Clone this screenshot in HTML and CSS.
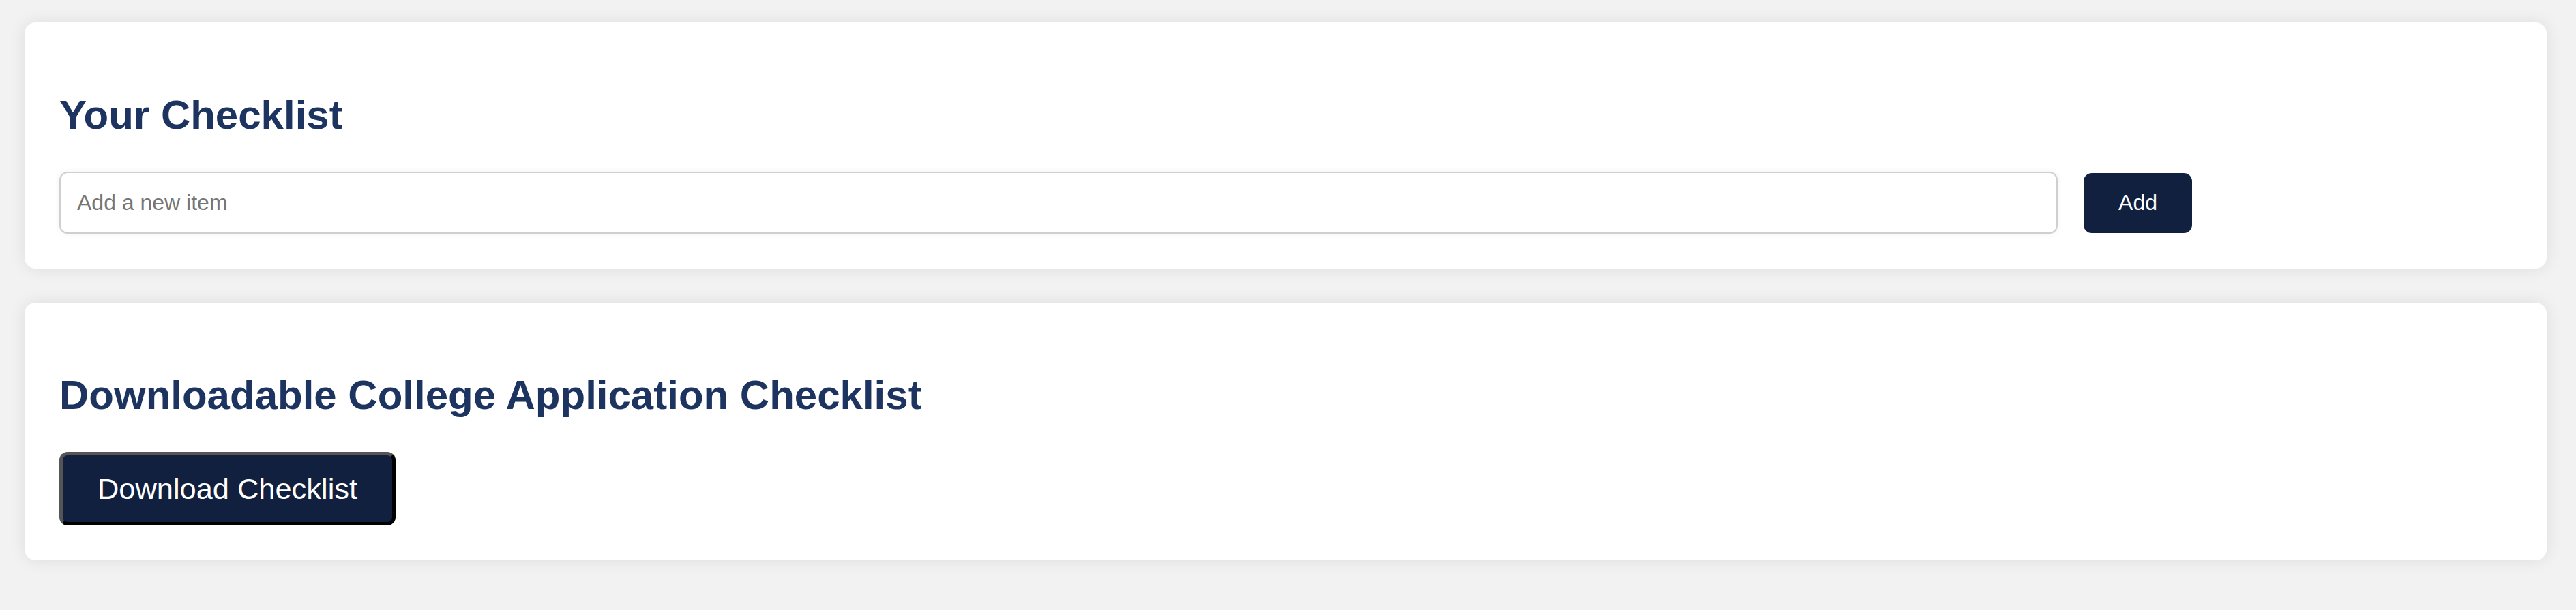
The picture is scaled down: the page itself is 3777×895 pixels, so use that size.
FILE: index.html
```html
<!DOCTYPE html>
<html lang="en">
<head>
<meta charset="utf-8">
<title>Checklist</title>
<link rel="stylesheet" href="styles.css">
</head>
<body>
<main class="page">
  <section class="card">
    <h2 class="card-title">Your Checklist</h2>
    <div class="add-row">
      <input class="add-input" type="text" placeholder="Add a new item">
      <button class="add-btn" type="button">Add</button>
    </div>
  </section>
  <section class="card">
    <h2 class="card-title">Downloadable College Application Checklist</h2>
    <button class="download-btn" type="button">Download Checklist</button>
  </section>
</main>
</body>
</html>
```

FILE: styles.css
```css
html, body {
  margin: 0;
  padding: 0;
  background: #f2f2f2;
  font-family: "Liberation Sans", Arial, sans-serif;
}

.page {
  padding: 33px 43px 73px 36px;
  display: flex;
  flex-direction: column;
  gap: 50px;
}

.card {
  background: #ffffff;
  border-radius: 16px;
  box-shadow: 0 0 24px rgba(0, 0, 0, 0.09);
  padding: 49px 51px 51px;
}

.card-title {
  margin: 53px 0 49px;
  font-size: 60px;
  line-height: 68px;
  font-weight: 700;
  color: #1d3461;
}

.add-row {
  display: flex;
  align-items: center;
  gap: 38px;
}

.add-input {
  box-sizing: border-box;
  width: 2930px;
  height: 91px;
  padding: 0 24px;
  border: 2px solid #cfcfcf;
  border-radius: 12px;
  box-shadow: 0 0 10px rgba(0, 0, 0, 0.06);
  font-family: "Liberation Sans", Arial, sans-serif;
  font-size: 32px;
  color: #222;
  outline: none;
}

.add-input::placeholder {
  color: #767676;
}

.add-btn {
  box-sizing: border-box;
  width: 159px;
  height: 88px;
  border: none;
  border-radius: 12px;
  background: #10203e;
  color: #ffffff;
  font-family: "Liberation Sans", Arial, sans-serif;
  font-size: 32px;
}

.download-btn {
  box-sizing: border-box;
  height: 108px;
  padding: 0 51px;
  border-width: 5px;
  border-style: solid;
  border-color: #555555 #000000 #000000 #555555;
  border-radius: 12px;
  background: #10203e;
  color: #ffffff;
  font-family: "Liberation Sans", Arial, sans-serif;
  font-size: 43.4px;
}
```
